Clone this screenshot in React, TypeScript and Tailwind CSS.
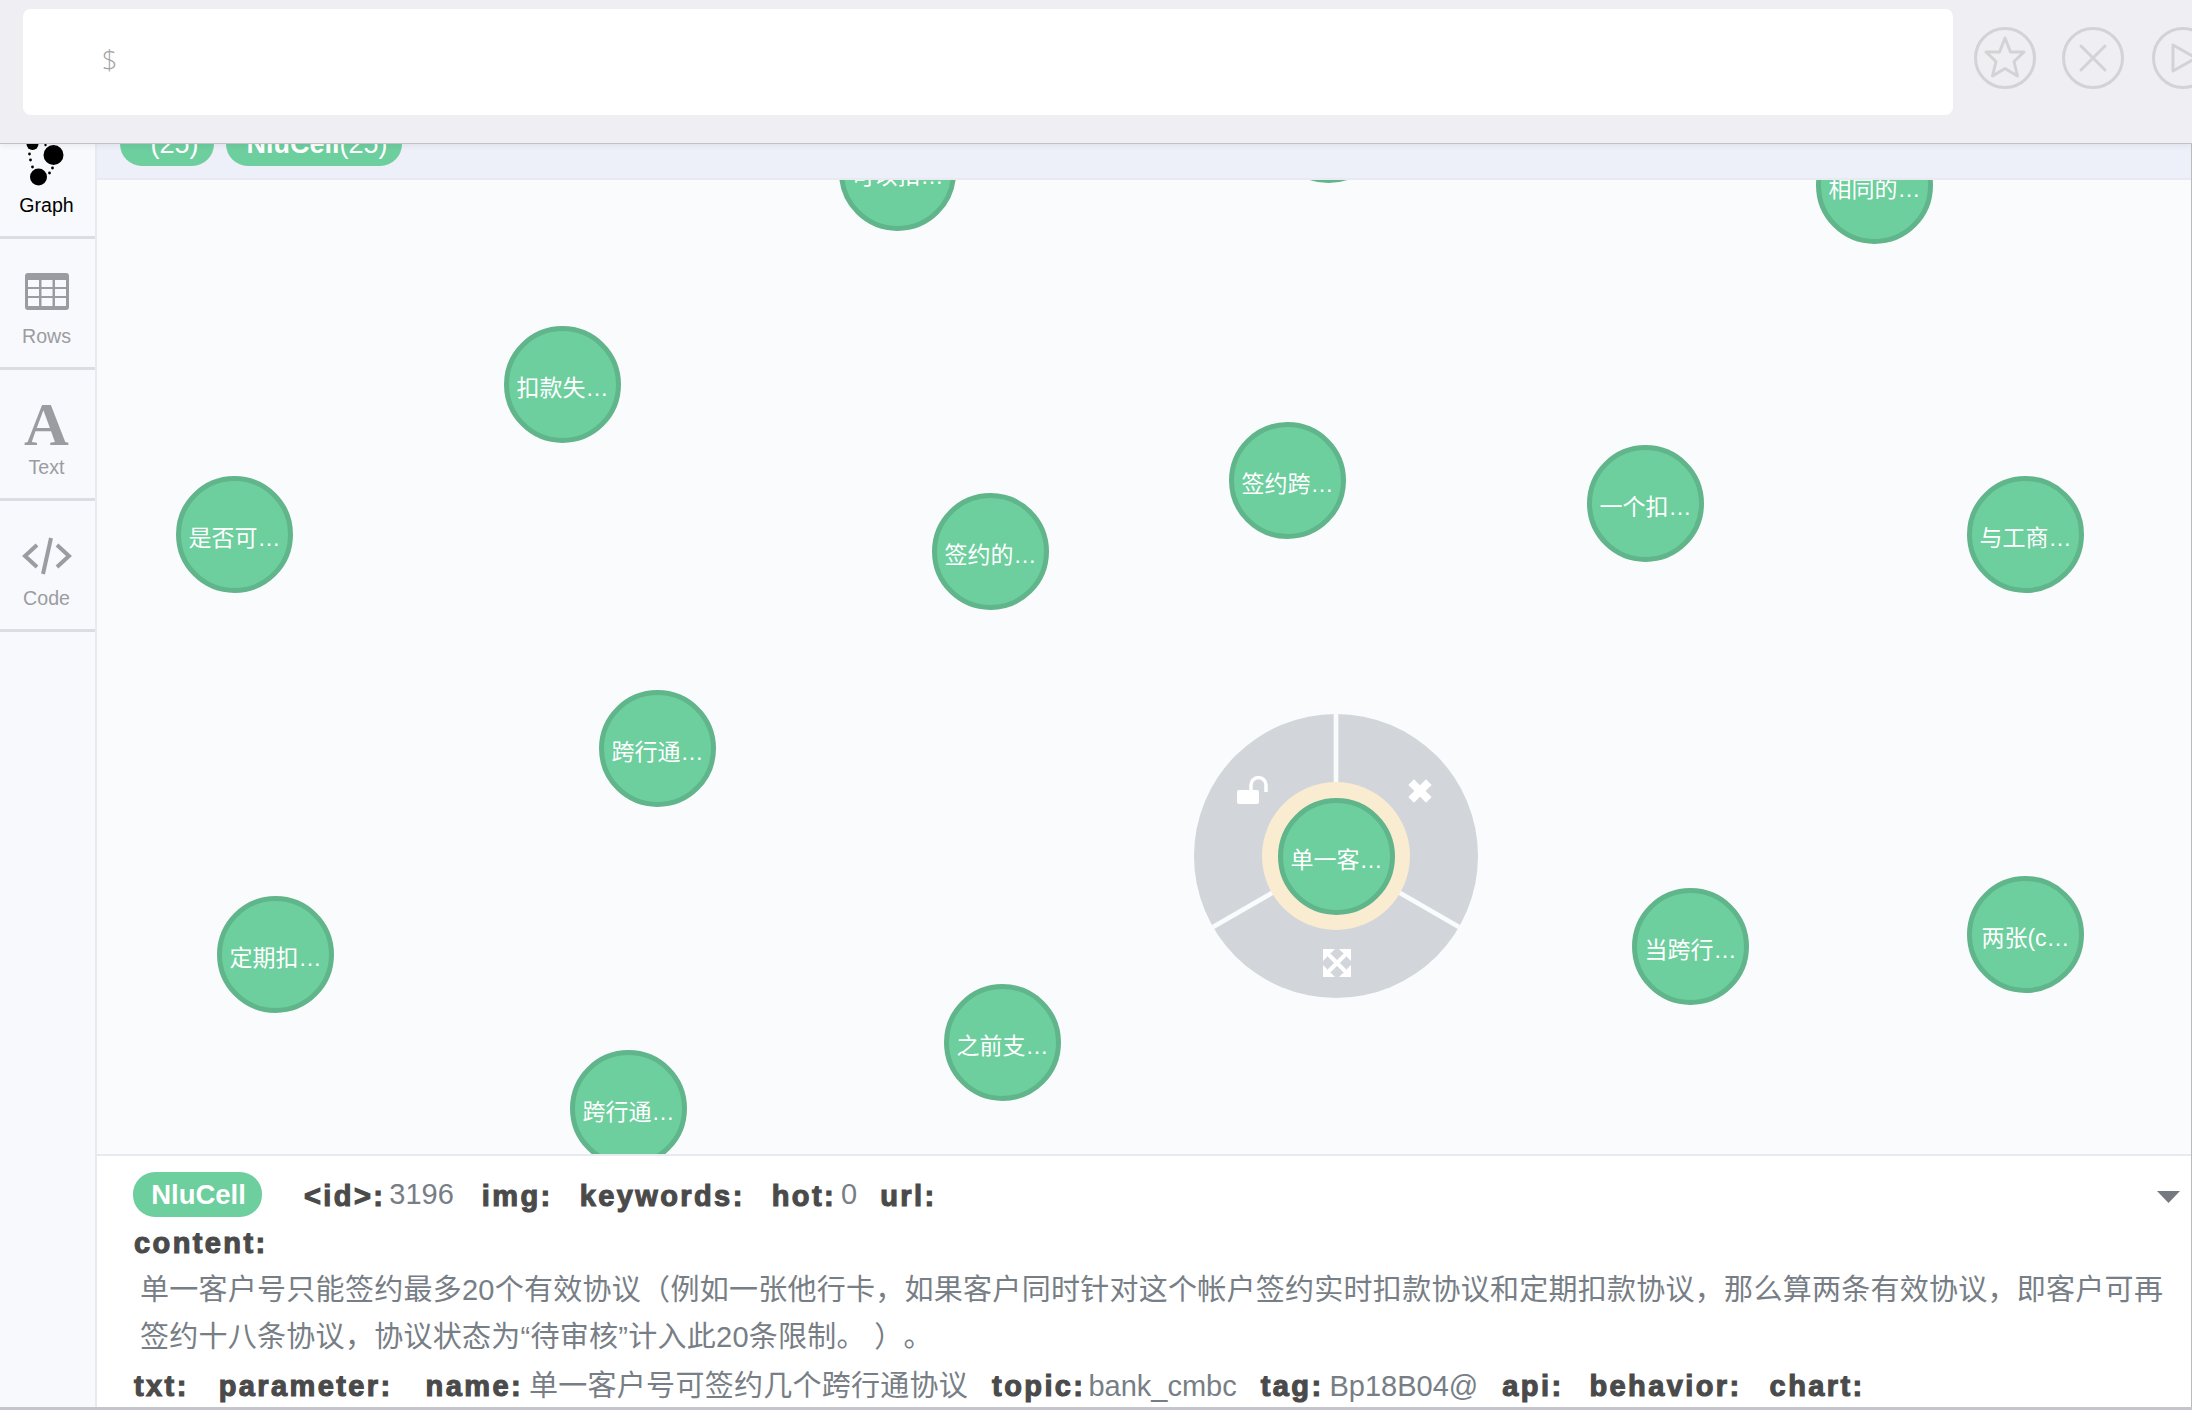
import React from 'react';

const sans = 'font-["Liberation_Sans","Noto_Sans_CJK_SC",sans-serif]';

const nodes = [
    { label: '可以扣…', pos: 'left-[742px] top-[-66px]' },
    { label: '', pos: 'left-[1173px] top-[-114px]' },
    { label: '相同的…', pos: 'left-[1719px] top-[-53px]' },
    { label: '扣款失…', pos: 'left-[407px] top-[146px]' },
    { label: '是否可…', pos: 'left-[79px] top-[296px]' },
    { label: '签约的…', pos: 'left-[835px] top-[313px]' },
    { label: '签约跨…', pos: 'left-[1132px] top-[242px]' },
    { label: '一个扣…', pos: 'left-[1490px] top-[265px]' },
    { label: '与工商…', pos: 'left-[1870px] top-[296px]' },
    { label: '跨行通…', pos: 'left-[502px] top-[510px]' },
    { label: '定期扣…', pos: 'left-[120px] top-[716px]' },
    { label: '之前支…', pos: 'left-[847px] top-[804px]' },
    { label: '当跨行…', pos: 'left-[1535px] top-[708px]' },
    { label: '两张(c…', pos: 'left-[1870px] top-[696px]' },
    { label: '跨行通…', pos: 'left-[473px] top-[870px]' },
    { label: '单一客…', pos: 'left-[1181px] top-[618px]' },
];

const Node = ({ label, pos }: { label: string; pos: string }) => (
    <div className={`absolute ${pos} flex h-[117px] w-[117px] items-center justify-center rounded-full border-[5px] border-[#60b58b] bg-[#6dce9e] pt-[8px] text-[23px] text-white`}>
        {label}
    </div>
);

const GraphIcon = () => (
    <svg width="50" height="48" viewBox="0 0 50 48" className="overflow-visible">
        <circle cx="31.5" cy="19" r="10" fill="#000" />
        <circle cx="16.5" cy="41" r="8.5" fill="#000" />
        <circle cx="10.5" cy="8" r="6" fill="#000" />
        <circle cx="7.5" cy="18" r="1.4" fill="#000" />
        <circle cx="8.5" cy="24" r="1.4" fill="#000" />
        <circle cx="10.5" cy="31" r="1.4" fill="#000" />
        <circle cx="27.5" cy="37" r="1.4" fill="#000" />
        <circle cx="30.5" cy="32" r="1.4" fill="#000" />
        <circle cx="23.5" cy="9" r="1.2" fill="#000" />
    </svg>
);

const RowsIcon = () => (
    <svg width="44" height="37" viewBox="0 0 44 37">
        <rect width="44" height="37" rx="3" fill="#9b9ca1" />
        <g fill="#f8f9fc">
            <rect x="3" y="7" width="11" height="7" />
            <rect x="16.5" y="7" width="11" height="7" />
            <rect x="30" y="7" width="11" height="7" />
            <rect x="3" y="16" width="11" height="7" />
            <rect x="16.5" y="16" width="11" height="7" />
            <rect x="30" y="16" width="11" height="7" />
            <rect x="3" y="25" width="11" height="8" />
            <rect x="16.5" y="25" width="11" height="8" />
            <rect x="30" y="25" width="11" height="8" />
        </g>
    </svg>
);

const CodeIcon = () => (
    <svg width="50" height="38" viewBox="0 0 50 38" className="mt-[6px]" fill="none" stroke="#9b9ca1" strokeWidth="4">
        <path d="M15 8 L3 19 L15 30" />
        <path d="M35 8 L47 19 L35 30" />
        <path d="M29 1 L21 37" />
    </svg>
);

const sideItems = [
    { label: 'Graph', icon: <GraphIcon />, active: true },
    { label: 'Rows', icon: <RowsIcon />, active: false },
    { label: 'Text', icon: <span className='mt-[3px] font-["Liberation_Serif",serif] text-[62px] font-bold leading-[48px] text-[#9b9ca1]'>A</span>, active: false },
    { label: 'Code', icon: <CodeIcon />, active: false },
];

const Sidebar = () => (
    <div className="w-[97px] shrink-0 border-r-2 border-[#e8eaf2] bg-[#f8f9fc] pt-[3px]">
        {sideItems.map((item) => (
            <div key={item.label} className="flex h-[131px] flex-col items-center border-b-[3px] border-[#dcdde3] pr-[2px] pt-[28px]">
                <div className="flex h-[48px] items-center justify-center">{item.icon}</div>
                <div className={`mt-[9px] text-[19.6px] leading-[24px] ${item.active ? 'text-black' : 'text-[#9b9ca1]'}`}>{item.label}</div>
            </div>
        ))}
    </div>
);

const CircleButton = ({ children, className }: { children: React.ReactNode; className: string }) => (
    <svg viewBox="0 0 62 62" fill="none" stroke="#d3d3d5" strokeWidth="3" strokeLinejoin="round" strokeLinecap="round" className={`h-[62px] w-[62px] shrink-0 ${className}`}>
        <circle cx="31" cy="31" r="29.5" />
        {children}
    </svg>
);

const Header = () => (
    <div className="relative z-10 flex h-[144px] shrink-0 items-start overflow-hidden border-b border-[#c2c2c6] bg-[#efeef2] pl-[23px] pt-[9px] shadow-[0_2px_6px_rgba(0,0,0,0.06)]">
        <div className='flex h-[106px] w-[1930px] shrink-0 items-center rounded-lg bg-white pb-[4px] pl-[79px] font-["Open_Sans",sans-serif] text-[27px] font-light text-[#a3a3a3]'>$</div>
        <CircleButton className="ml-[21px] mt-[18px]">
            <path d="M31 11 L36.5 25 L50 25 L40 34.5 L43.5 49 L31 41.5 L18.500 49 L22 34.500 L12 25 L25.500 25 Z" />
        </CircleButton>
        <CircleButton className="ml-[26px] mt-[18px]">
            <path d="M19 19 L43 43 M43 19 L19 43" />
        </CircleButton>
        <CircleButton className="ml-[28px] mt-[18px]">
            <path d="M21 18 L21 44 L44 31 Z" />
        </CircleButton>
    </div>
);

const Pill = ({ bold, rest, className }: { bold: string; rest: string; className: string }) => (
    <div className={`flex h-[44px] items-end rounded-b-[22px] bg-[#6dce9e] pb-[7px] text-[27px] leading-[30px] text-white ${className}`}>
        <span className="font-bold">{bold}</span>
        {rest}
    </div>
);

const ContextMenu = () => (
    <svg viewBox="0 0 300 300" className="absolute left-[1089px] top-[526px] h-[300px] w-[300px]">
        <circle cx="150" cy="150" r="142" fill="#d2d5da" />
        <g stroke="#fafbfd" strokeWidth="4.700">
            <path d="M150 150 L150 5" />
            <path d="M150 150 L27 221" />
            <path d="M150 150 L273 221" />
        </g>
        <circle cx="150" cy="150" r="74" fill="#f9ecd1" />
        {/* lock */}
        <rect x="51" y="84" width="22" height="14" rx="2" fill="#fff" />
        <path d="M65 84 V79 A7 7 0 0 1 80 79 V86" fill="none" stroke="#fff" strokeWidth="3.500" />
        {/* close */}
        <path d="M228 79 L240 91 M240 79 L228 91" stroke="#fff" strokeWidth="8" strokeLinecap="square" />
        {/* expand */}
        <g fill="#fff">
            <path d="M137 243 H149 L145 247 L141 247 L141 251 L137 255 Z" />
            <path d="M165 243 H153 L157 247 L161 247 L161 251 L165 255 Z" />
            <path d="M137 271 H149 L145 267 L141 267 L141 263 L137 259 Z" />
            <path d="M165 271 H153 L157 267 L161 267 L161 263 L165 259 Z" />
        </g>
        <path d="M140 246 L162 268 M162 246 L140 268" stroke="#fff" strokeWidth="4" />
    </svg>
);

const Label = ({ children, className = '' }: { children: React.ReactNode; className?: string }) => (
    <span className={`font-bold tracking-[2.4px] text-[#4a4a4a] [-webkit-text-stroke:1.1px_#4a4a4a] ${className}`}>{children}</span>
);

const Value = ({ children, className = '' }: { children: React.ReactNode; className?: string }) => (
    <span className={`text-[#777e85] ${className}`}>{children}</span>
);

const InfoPanel = () => (
    <div className="h-[253px] shrink-0 overflow-hidden border-t-2 border-[#e8eaf2] bg-white pl-[37px] pr-[10px] pt-[16px] text-[29px] leading-[47px]">
        <div className="flex h-[48px] items-center">
            <div className="mb-[4px] ml-[-1px] flex h-[45px] w-[129px] items-center justify-center rounded-[22px] bg-[#6dce9e] pl-[2px] text-[27.5px] font-bold text-white">NluCell</div>
            <Label className="ml-[42px]">&lt;id&gt;:</Label>
            <Value className="mb-[3px] ml-[4px]">3196</Value>
            <Label className="ml-[28px]">img:</Label>
            <Label className="ml-[27px]">keywords:</Label>
            <Label className="ml-[27px]">hot:</Label>
            <Value className="mb-[3px] ml-[5px]">0</Value>
            <Label className="ml-[23px]">url:</Label>
            <svg width="23" height="12" viewBox="0 0 23 12" className="ml-auto mr-[1px] mt-[2px]">
                <path d="M0 0 H23 L11.500 12 Z" fill="#747a80" />
            </svg>
        </div>
        <div className="h-[47px]">
            <Label>content:</Label>
        </div>
        <div className="pl-[6px] pr-[5px] tracking-[0.27px] text-[#777e85] [text-spacing-trim:space-all]">单一客户号只能签约最多20个有效协议（例如一张他行卡，如果客户同时针对这个帐户签约实时扣款协议和定期扣款协议，那么算两条有效协议，即客户可再签约十八条协议，协议状态为“待审核”计入此20条限制。 ）。</div>
        <div className="mt-[2px] flex h-[47px] whitespace-nowrap">
            <Label>txt:</Label>
            <Label className="ml-[30px]">parameter:</Label>
            <Label className="ml-[33px]">name:</Label>
            <Value className="ml-[6px] tracking-[0.27px]">单一客户号可签约几个跨行通协议</Value>
            <Label className="ml-[24px]">topic:</Label>
            <Value className="ml-[3px]">bank_cmbc</Value>
            <Label className="ml-[24px]">tag:</Label>
            <Value className="ml-[6px]">Bp18B04@</Value>
            <Label className="ml-[24px]">api:</Label>
            <Label className="ml-[26px]">behavior:</Label>
            <Label className="ml-[28px]">chart:</Label>
        </div>
    </div>
);

const App = () => {
    return (
        <div className={`flex h-[1410px] w-[2192px] flex-col overflow-hidden border-b-[3px] border-[#c5c6cc] bg-white ${sans}`}>
            <Header />
            <div className="mt-[-39px] flex min-h-0 flex-1">
                <Sidebar />
                <div className="flex min-w-0 flex-1 flex-col border-r border-[#bbbbbb]">
                    <div className="flex h-[75px] shrink-0 items-end gap-[12px] border-b-2 border-[#e8e9f1] bg-[#edf0f8] pb-[12px] pl-[23px]">
                        <Pill bold="*" rest="(25)" className="pl-[20px] pr-[15px]" />
                        <Pill bold="NluCell" rest="(25)" className="pl-[21px] pr-[14px]" />
                    </div>
                    <div className="relative min-h-0 flex-1 overflow-hidden bg-[#fafbfd]">
                        <ContextMenu />
                        {nodes.map((node) => (
                            <Node key={node.pos} label={node.label} pos={node.pos} />
                        ))}
                    </div>
                    <InfoPanel />
                </div>
            </div>
        </div>
    );
};

export default App;
